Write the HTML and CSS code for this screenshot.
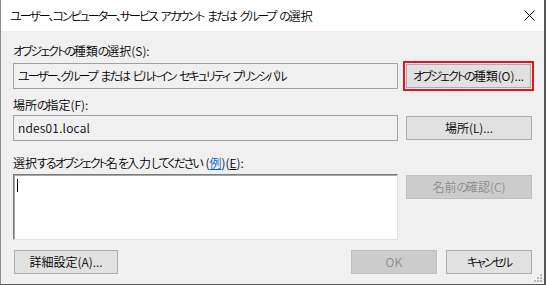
FILE: index.html
```html
<!DOCTYPE html>
<html lang="ja">
<head>
<meta charset="utf-8">
<title>ユーザー、コンピューター、サービス アカウント または グループ の選択</title>
<link rel="stylesheet" href="styles.css">
</head>
<body>
<div class="window">
  <div class="titlebar">
    <span class="title">ユーザー、コンピューター、サービス アカウント または グループ の<span class="n">選択</span></span>
    <svg class="close" width="11" height="11" viewBox="0 0 11 11"><path d="M0.5 0.5 L10.5 10.5 M10.5 0.5 L0.5 10.5" stroke="#000" stroke-width="1" fill="none"/></svg>
  </div>
  <div class="body">
    <div class="label first">オブジェクトの<span class="n">種類</span>の<span class="n">選択(S):</span></div>
    <div class="row">
      <div class="field">ユーザー、グループ または ビルトイン セキュリティ プリンシパル</div>
      <div class="btn focused">オブジェクトの<span class="n">種類(O)...</span></div>
    </div>
    <div class="label second"><span class="n">場所</span>の<span class="n">指定(F):</span></div>
    <div class="row">
      <div class="field latin">ndes01.local</div>
      <div class="btn n">場所(L)...</div>
    </div>
    <div class="label third"><span class="n">選択</span>するオブジェクト<span class="n">名</span>を<span class="n">入力</span>してください <span class="n">(<span class="link">例</span>)(<span class="ul">E</span>):</span></div>
    <div class="row top">
      <div class="textarea"><span class="caret"></span></div>
      <div class="btn disabled"><span class="n">名前</span>の<span class="n">確認(C)</span></div>
    </div>
    <div class="footer">
      <div class="btn adv n">詳細設定(A)...</div>
      <div class="spacer"></div>
      <div class="btn small disabled latin">OK</div>
      <div class="btn small">キャンセル</div>
    </div>
  </div>
  <svg class="grip" width="8" height="8" viewBox="0 0 8 8">
    <rect x="6" y="0" width="2" height="2" fill="#b8b8b8"/>
    <rect x="3" y="3" width="2" height="2" fill="#b8b8b8"/>
    <rect x="6" y="3" width="2" height="2" fill="#b8b8b8"/>
    <rect x="0" y="6" width="2" height="2" fill="#b8b8b8"/>
    <rect x="3" y="6" width="2" height="2" fill="#b8b8b8"/>
    <rect x="6" y="6" width="2" height="2" fill="#b8b8b8"/>
  </svg>
</div>
</body>
</html>
```
FILE: styles.css
```css
html, body {
  margin: 0;
  padding: 0;
  background: #f0f0f0;
}
.window {
  position: relative;
  width: 546px;
  height: 285px;
  box-sizing: border-box;
  background: #f0f0f0;
  border-left: 1px solid #8c8c8c;
  border-right: 2px solid #555555;
  border-bottom: 1px solid #5a5a5a;
  display: flex;
  flex-direction: column;
  font-family: "Noto Sans CJK JP", "Noto Sans", sans-serif;
  font-size: 12px;
  font-weight: 350;
  font-feature-settings: "palt";
  letter-spacing: -2px;
  word-spacing: 3px;
  color: #000;
  overflow: hidden;
}
.n {
  letter-spacing: 0;
}
.latin {
  letter-spacing: 0.2px;
}
.titlebar {
  height: 31px;
  flex: none;
  background: #ffffff;
  display: flex;
  align-items: center;
  justify-content: space-between;
  padding-left: 9px;
  padding-right: 9px;
}
.title {
  line-height: 16px;
}
.close {
  display: block;
}
.body {
  flex: 1;
  display: flex;
  flex-direction: column;
  padding: 0 12px 0 12px;
}
.label {
  line-height: 16px;
  height: 16px;
  white-space: nowrap;
}
.label.first { margin-top: 12px; margin-bottom: 4px; }
.label.second { margin-top: 8px; margin-bottom: 2px; }
.label.third { margin-top: 14px; margin-bottom: 3px; }
.link {
  color: #0066cc;
  text-decoration: underline;
}
.ul {
  text-decoration: underline;
}
.row {
  display: grid;
  grid-template-columns: 385px 126px;
  column-gap: 8px;
  align-items: center;
}
.row.top {
  align-items: start;
}
.field {
  height: 26px;
  box-sizing: border-box;
  border: 1px solid #a0a0a0;
  background: #f0f0f0;
  padding-left: 4px;
  line-height: 23px;
  white-space: nowrap;
  overflow: hidden;
}
.textarea {
  height: 66px;
  box-sizing: border-box;
  background: #ffffff;
  border-top: 1px solid #7a7a7a;
  border-left: 1px solid #7a7a7a;
  border-right: 1px solid #e3e3e3;
  border-bottom: 1px solid #e3e3e3;
  box-shadow: inset 1px 1px 0 #a8a8a8;
  padding: 4px 0 0 3px;
}
.caret {
  display: block;
  width: 1px;
  height: 13px;
  background: #000;
}
.btn {
  height: 24px;
  box-sizing: border-box;
  background: #e1e1e1;
  border: 1px solid #adadad;
  display: flex;
  align-items: center;
  justify-content: center;
  white-space: nowrap;
  line-height: 16px;
}
.row.top .btn {
  margin-top: 1px;
}
.btn.focused {
  outline: 2px solid #e81123;
  outline-offset: 1px;
  margin: 0 1px 0 0;
}
.btn.disabled {
  background: #cccccc;
  border-color: #bfbfbf;
  color: #8d8d8d;
}
.footer {
  display: flex;
  align-items: center;
  margin-top: 10px;
  gap: 9px;
}
.btn.adv {
  width: 104px;
  margin-left: 1px;
}
.spacer {
  flex: 1;
}
.btn.small {
  width: 86px;
}
.grip {
  position: absolute;
  right: 2px;
  bottom: 2px;
}
```
